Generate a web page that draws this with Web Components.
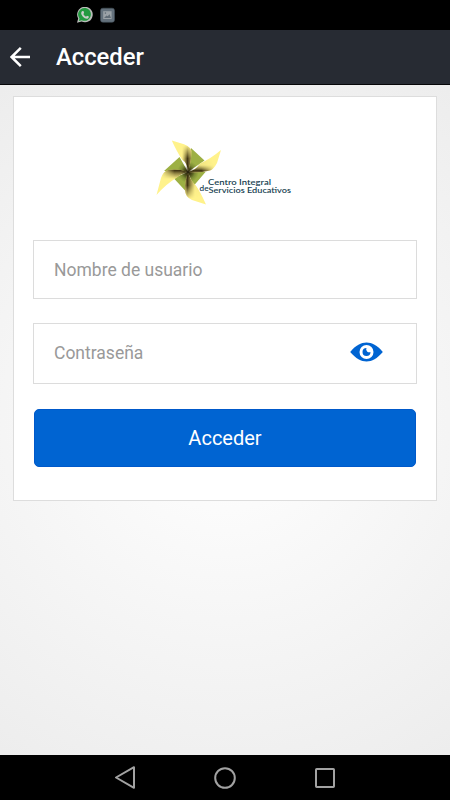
<!DOCTYPE html>
<html lang="es"><head><meta charset="utf-8"><title>Acceder</title>
<style>html,body{margin:0;height:100%;overflow:hidden;font-family:Roboto,"Liberation Sans",sans-serif}</style></head>
<body><login-screen></login-screen>
<script>
const define=(name,html)=>customElements.define(name,class extends HTMLElement{
  constructor(){super();this.attachShadow({mode:'open'}).innerHTML=html}
});
define('status-bar',`<style>:host{display:flex;height:30px;background:#000;box-sizing:border-box;padding:7px 0 0 77px;gap:7px}svg{display:block}</style>
<svg width="16" height="16" viewBox="0 0 16 16"><path d="M0 15.7L1.2 11.5A7.8 7.8 0 1 1 4.6 14.6Z" fill="#b9bdb9"/><path d="M1.8 14L2.5 11.4A6.4 6.4 0 1 1 4.8 13.2Z" fill="#239a40"/><path d="M5.4 4.1L6.7 4.3 7.1 6.1 6.3 7Q7.1 8.8 9 9.7L10 8.8 11.9 9.6Q12 11.2 10.5 11.7C7.6 12.2 4 8.4 4.2 6Q4.3 4.7 5.4 4.1Z" fill="#c9cec9"/></svg>
<svg width="15" height="16" viewBox="0 0 15 16"><rect x=".5" y="1.2" width="14" height="14" rx="2.3" fill="#64717c" stroke="#43505b" stroke-width=".6"/><rect x="3.2" y="4.2" width="8.4" height="7.8" fill="#9ba2a7"/><path d="M4 10.9L6.5 8.4 7.7 9.3 9.5 7.3 11 10.9Z" fill="#606c76"/><circle cx="5.4" cy="6.1" r=".8" fill="#606c76"/></svg>`);
define('app-header',`<style>:host{display:flex;height:55px;box-sizing:border-box;background:#272b33;border-bottom:1px solid #060608;padding-left:10px;gap:26px;align-items:center;color:#fff}svg{display:block}h1{font-size:23.8px;line-height:28px;font-weight:500;margin:0}</style>
<svg width="20" height="22" viewBox="0 0 20 22"><path d="M20 11H1.7M10.8 1.8L1.6 11L10.8 20.2" fill="none" stroke="#fff" stroke-width="2.5"/></svg><h1><slot></slot></h1>`);
define('brand-logo',`<style>:host{display:block;height:69px}svg{display:block;margin:auto}text{font-family:Lato,sans-serif;fill:#173f51;font-size:8px;font-weight:600}.first{font-size:7.6px}</style>
<svg width="140" height="69" viewBox="155 138 140 69">
<defs>
<radialGradient id="g" gradientUnits="userSpaceOnUse" cx="188" cy="172" r="18"><stop stop-color="#302e0c"/><stop offset=".3" stop-color="#6d7b2d"/><stop offset=".6" stop-color="#9db044"/></radialGradient>
<linearGradient id="v" gradientUnits="userSpaceOnUse" x1="182" y1="0" x2="195" y2="0"><stop stop-color="#5c4e1d" stop-opacity="0"/><stop offset=".42" stop-color="#403413"/><stop offset=".65" stop-color="#766932" stop-opacity=".8"/><stop offset="1" stop-color="#766932" stop-opacity=".05"/></linearGradient>
<linearGradient id="h" gradientUnits="userSpaceOnUse" x1="0" y1="165" x2="0" y2="179"><stop stop-color="#766932" stop-opacity=".1"/><stop offset=".4" stop-color="#403413"/><stop offset=".65" stop-color="#766932" stop-opacity=".7"/><stop offset="1" stop-color="#766932" stop-opacity="0"/></linearGradient>
<radialGradient id="fade" gradientUnits="userSpaceOnUse" cx="188" cy="172" r="27"><stop offset=".5" stop-color="#fff"/><stop offset="1" stop-color="#000"/></radialGradient>
<mask id="m" maskUnits="userSpaceOnUse" x="155" y="138" width="70" height="69"><rect x="155" y="138" width="70" height="69" fill="url(#fade)"/></mask>
<radialGradient id="d" gradientUnits="userSpaceOnUse" cx="188" cy="172" r="7"><stop stop-color="#171305"/><stop offset=".35" stop-color="#302a0d" stop-opacity=".6"/><stop offset="1" stop-color="#302a0d" stop-opacity="0"/></radialGradient>
<path id="t" d="M171.8 140.5L184 144.3Q191 147.5 191.5 151Q191.5 161 188 172Q187.5 163 182 159.5Q177 152 171.8 140.5Z"/>
<path id="r" d="M188 172Q195 171 200 163.5Q211 158.5 221 150L217 163Q213.5 169.5 210 170.5Q199 173.5 188 172Z"/>
<path id="b" d="M188 172Q190 180 195.5 185Q200 191 206 204.5L192 200Q185 197 185 190Q184.5 182 188 172Z"/>
<path id="l" d="M188 172Q182 173 177 177.5Q166 184 156.5 195L161 178Q163.5 171 168 170Q178 168.5 188 172Z"/></defs>
<path d="M191 148L204.5 160.5L188 172ZM188 172L205.5 172L193.5 186ZM188 172L173.5 178L186 191.5ZM188 172L164 171L179.5 157Z" fill="url(#g)"/>
<g fill="#fff28b"><use href="#t"/><use href="#r"/><use href="#b"/><use href="#l"/></g>
<g mask="url(#m)"><use href="#t" fill="url(#v)"/><use href="#b" fill="url(#v)"/><use href="#r" fill="url(#h)"/><use href="#l" fill="url(#h)"/></g>
<circle cx="188" cy="172" r="7" fill="url(#d)"/>
<text class="first" x="208" y="184.7" textLength="63" lengthAdjust="spacingAndGlyphs">Centro Integral</text><text x="199.5" y="191.3" textLength="9" lengthAdjust="spacingAndGlyphs">de</text><text x="208.5" y="192.5" textLength="82.5" lengthAdjust="spacingAndGlyphs">Servicios Educativos</text></svg>`);
define('form-field',`<style>:host{display:flex;box-sizing:border-box;align-items:center;justify-content:space-between;border:1px solid #dcdcdc;height:59px;padding:1px 33px 1px 20px;color:#999;font-size:17.5px;line-height:22px}::slotted(eye-icon){margin-top:-3px}</style><span><slot></slot></span><slot name="icon"></slot>`);
define('eye-icon',`<style>:host,svg{display:block}</style><svg width="33" height="20" viewBox="0 0 33 20"><path d="M.2 10C6 3.2 11 .6 16.5.6S27 3.2 32.8 10C27 16.8 22 19.4 16.5 19.4S6 16.8.2 10Z" fill="#0064d2"/><circle cx="16.5" cy="10" r="7" fill="#fff"/><path d="M16.5 6A4 4 0 1 0 20.5 10 3 3 0 0 1 16.5 6Z" fill="#0064d2"/></svg>`);
define('primary-button',`<style>:host{display:block}button{display:block;width:100%;height:58px;border:1px solid #0059ca;border-radius:5px;background:#0064d2;color:#fff;padding:0;font:400 20px/24px Roboto,sans-serif}</style><button><slot></slot></button>`);
define('login-card',`<style>:host{display:flex;flex-direction:column;box-sizing:border-box;height:405px;border:1px solid #ddd;background:#fff;padding:41px 19px 0}brand-logo{margin-bottom:33px}.pw{height:61px;margin-top:23.5px}primary-button{margin:25px 1px 0}</style>
<brand-logo></brand-logo><form-field>Nombre de usuario</form-field><form-field class="pw">Contraseña<eye-icon slot="icon"></eye-icon></form-field><primary-button>Acceder</primary-button>`);
define('nav-bar',`<style>:host{display:flex;height:45px;background:#000;justify-content:center;gap:76px;align-items:center}svg{display:block}path,circle,rect{fill:none;stroke:#a2a2a2;stroke-width:2}</style>
<svg width="24" height="24" viewBox="0 0 24 24"><path d="M21 1.2V21.8L3 11.5Z" stroke-linejoin="round"/></svg><svg width="24" height="24" viewBox="0 0 24 24"><circle cx="12" cy="12" r="9.8"/></svg><svg width="24" height="24" viewBox="0 0 24 24"><rect x="3" y="3" width="18" height="18" rx=".7"/></svg>`);
define('login-screen',`<style>:host{display:flex;flex-direction:column;width:450px;height:800px}main{flex:1;box-sizing:border-box;padding:11px 13px;background:radial-gradient(circle 400px at 50% 50%,#fff 0,#ededed 100%)}</style>
<status-bar></status-bar><app-header>Acceder</app-header><main><login-card></login-card></main><nav-bar></nav-bar>`);
</script></body></html>
